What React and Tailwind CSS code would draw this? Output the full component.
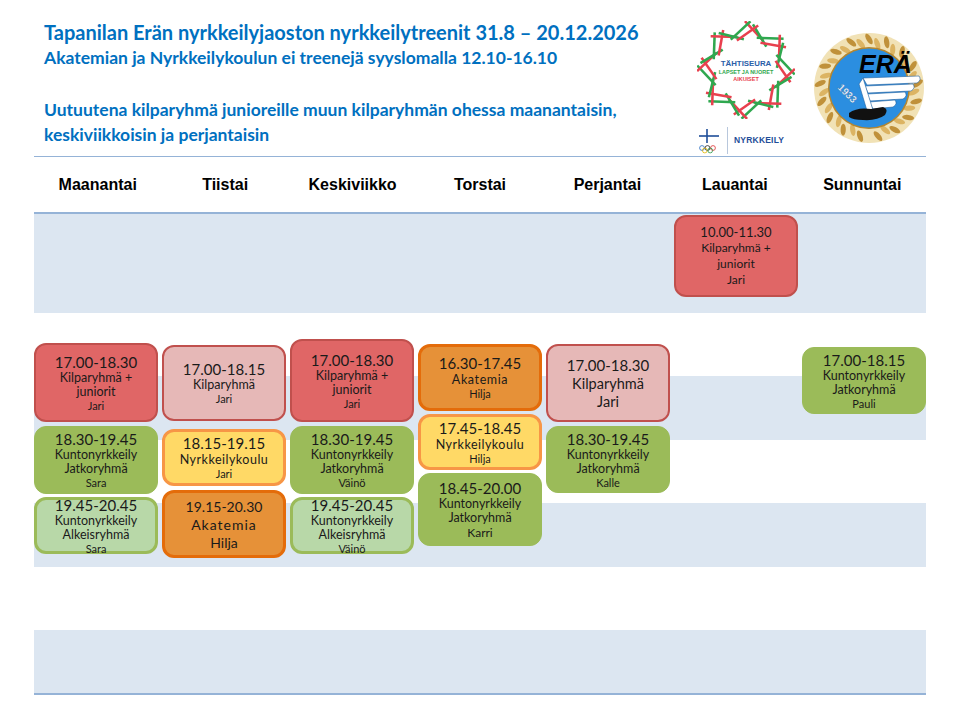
import React from 'react';

const T = 'text-[15px] leading-[18px]';
const N = 'text-[12.5px] leading-[14px]';
const S = 'text-[11px] leading-[14px]';
const L = 'text-[14px] leading-[19px]';

const tone = {
    red: 'bg-[#e06666] border-2 border-[#c0504d]',
    pink: 'bg-[#e6b8b7] border-2 border-[#c0504d]',
    green: 'bg-[#9bbb59] border border-[#9bbb59]',
    light: 'bg-[#b8d8a8] border-[3px] border-[#9bbb59]',
    yellow: 'bg-[#ffd966] border-[3px] border-[#f79646]',
    orange: 'bg-[#e69138] border-[3px] border-[#e46c0a]',
};

const days = ['Maanantai', 'Tiistai', 'Keskiviikko', 'Torstai', 'Perjantai', 'Lauantai', 'Sunnuntai'];

const columns = [
    [
        { t: 'red', box: 'mt-[129px] h-[79px]', lines: [['17.00-18.30', T], ['Kilparyhmä +', N], ['juniorit', N], ['Jari', S]] },
        { t: 'green', box: 'mt-[4px] h-[68px]', lines: [['18.30-19.45', T], ['Kuntonyrkkeily', N], ['Jatkoryhmä', N], ['Sara', S]] },
        { t: 'light', box: 'mt-[3px] h-[57px]', lines: [['19.45-20.45', T], ['Kuntonyrkkeily', N], ['Alkeisryhmä', N], ['Sara', S]] },
    ],
    [
        { t: 'pink', box: 'mt-[131px] h-[76px]', lines: [['17.00-18.15', T], ['Kilparyhmä', N], ['Jari', S]] },
        { t: 'yellow', box: 'mt-[8px] h-[57px]', lines: [['18.15-19.15', T], ['Nyrkkeilykoulu', 'text-[12.5px] leading-[15px] tracking-[0.5px]'], ['Jari', S]] },
        { t: 'orange', box: 'mt-[4px] h-[68px]', lines: [['19.15-20.30', L], ['Akatemia', 'text-[14px] leading-[17px] tracking-[1px]'], ['Hilja', 'text-[14px] leading-[19px]']] },
    ],
    [
        { t: 'red', box: 'mt-[125px] h-[83px]', lines: [['17.00-18.30', T], ['Kilparyhmä +', N], ['juniorit', N], ['Jari', S]] },
        { t: 'green', box: 'mt-[4px] h-[68px]', lines: [['18.30-19.45', T], ['Kuntonyrkkeily', N], ['Jatkoryhmä', N], ['Väinö', S]] },
        { t: 'light', box: 'mt-[3px] h-[57px]', lines: [['19.45-20.45', T], ['Kuntonyrkkeily', N], ['Alkeisryhmä', N], ['Väinö', S]] },
    ],
    [
        { t: 'orange', box: 'mt-[130px] h-[67px]', lines: [['16.30-17.45', T], ['Akatemia', 'text-[12.5px] leading-[15px] tracking-[0.6px]'], ['Hilja', S]] },
        { t: 'yellow', box: 'mt-[3px] h-[56px]', lines: [['17.45-18.45', T], ['Nyrkkeilykoulu', 'text-[12.5px] leading-[15px] tracking-[0.5px]'], ['Hilja', S]] },
        { t: 'green', box: 'mt-[3px] h-[73px]', lines: [['18.45-20.00', T], ['Kuntonyrkkeily', N], ['Jatkoryhmä', N], ['Karri', 'text-[12px] leading-[16px]']] },
    ],
    [
        { t: 'pink', box: 'mt-[130px] h-[78px]', lines: [['17.00-18.30', 'text-[15px] leading-[18px]'], ['Kilparyhmä', 'text-[14.5px] leading-[19px]'], ['Jari', 'text-[14.5px] leading-[18px]']] },
        { t: 'green', box: 'mt-[4px] h-[67px]', lines: [['18.30-19.45', T], ['Kuntonyrkkeily', N], ['Jatkoryhmä', N], ['Kalle', S]] },
    ],
    [
        { t: 'red', box: 'mt-[1px] h-[82px]', lines: [['10.00-11.30', 'text-[13px] leading-[16px]'], ['Kilparyhmä +', 'text-[12px] leading-[16px]'], ['juniorit', 'text-[12px] leading-[16px]'], ['Jari', 'text-[12px] leading-[16px]']] },
    ],
    [
        { t: 'green', box: 'mt-[133px] h-[67px]', lines: [['17.00-18.15', T], ['Kuntonyrkkeily', N], ['Jatkoryhmä', N], ['Pauli', S]] },
    ],
];

const bands = [
    'h-[99px] bg-[#dce6f1]',
    'h-[63px]',
    'h-[64px] bg-[#dce6f1]',
    'h-[63px]',
    'h-[64px] bg-[#dce6f1]',
    'h-[63px]',
    'h-[63px] bg-[#dce6f1]',
];

const Card = ({ t, box, lines }) => (
    <div className={`${box} ${tone[t]} rounded-xl flex flex-col items-center justify-center text-[#1a1a1a] text-center`}>
        {lines.map(([txt, cls], i) => (
            <div key={i} className={cls}>{txt}</div>
        ))}
    </div>
);

const StarLogo = () => {
    const sticks = [];
    const star = (rot, r1, r2, offset) => {
        const pts = [];
        for (let i = 0; i < 16; i++) {
            const a = ((i * 22.5 + rot) * Math.PI) / 180;
            const r = i % 2 === 0 ? r1 : r2;
            pts.push([50 + r * Math.sin(a), 50 - r * Math.cos(a)]);
        }
        for (let i = 0; i < 16; i++) {
            const [x1, y1] = pts[i];
            const [x2, y2] = pts[(i + 1) % 16];
            const dx = x2 - x1, dy = y2 - y1;
            const len = Math.hypot(dx, dy);
            const ex = (dx / len) * 4, ey = (dy / len) * 4;
            sticks.push({
                x1: x1 - ex, y1: y1 - ey, x2: x2 + ex, y2: y2 + ey,
                c: (i + offset) % 2 === 0 ? '#e8404e' : '#2fa84f',
            });
        }
    };
    star(2, 47, 36, 0);
    star(12, 44, 33, 1);
    return (
        <svg width="98" height="98" viewBox="0 0 100 100">
            {sticks.map((s, i) => (
                <line key={i} x1={s.x1} y1={s.y1} x2={s.x2} y2={s.y2} stroke={s.c} strokeWidth="2.6" />
            ))}
            <text x="50" y="46" textAnchor="middle" fontFamily="Liberation Sans, sans-serif" fontWeight="700" fontSize="8" fill="#2a5ea8">TÄHTISEURA</text>
            <text x="50" y="54" textAnchor="middle" fontFamily="Liberation Sans, sans-serif" fontWeight="700" fontSize="5.6" fill="#2fa84f">LAPSET JA NUORET</text>
            <text x="50" y="61" textAnchor="middle" fontFamily="Liberation Sans, sans-serif" fontWeight="700" fontSize="5.6" fill="#e8404e">AIKUISET</text>
        </svg>
    );
};

const EraLogo = () => {
    const leaves = [];
    for (let i = 0; i < 34; i++) {
        const deg = i * (360 / 34);
        if (deg > 170 && deg < 190) continue;
        const a = (deg * Math.PI) / 180;
        const r = i % 2 === 0 ? 49 : 45;
        leaves.push({ x: 56 + r * Math.sin(a), y: 56 - r * Math.cos(a), rot: deg + 60, c: i % 2 === 0 ? '#c0913a' : '#dcb463' });
    }
    return (
        <svg width="112" height="112" viewBox="0 0 112 112">
            <circle cx="56" cy="56" r="55" fill="#f1e2b6" />
            {leaves.map((l, i) => (
                <ellipse key={i} cx={l.x} cy={l.y} rx="6" ry="2.6" fill={l.c} transform={`rotate(${l.rot} ${l.x} ${l.y})`} />
            ))}
            <circle cx="56" cy="56" r="41" fill="#b5862f" />
            <circle cx="56" cy="56" r="39.5" fill="#2b8ee0" />
            <g fill="#ffffff" stroke="#1f5fa0" strokeWidth="0.6">
                <path d="M50 46 L106 44 Q109 48 104 51 L54 53 Z" />
                <path d="M52 54 L100 52 Q103 56 98 59 L55 61 Z" />
                <path d="M54 62 L92 60 Q95 64 90 67 L57 69 Z" />
                <path d="M56 70 L82 68 Q85 72 80 75 L60 77 Z" />
                <path d="M50 46 L60 78 L55 82 L46 52 Z" />
            </g>
            <text x="46" y="41" fontFamily="Liberation Sans, sans-serif" fontStyle="italic" fontWeight="700" fontSize="25" fill="#000000">ERÄ</text>
            <text x="24" y="56" fontFamily="Liberation Sans, sans-serif" fontWeight="700" fontSize="10" fill="#ffffff" stroke="#1f5fa0" strokeWidth="0.3" transform="rotate(45 24 56)">1933</text>
            <path d="M36 81 Q44 75 58 77 L70 75 Q76 77 72 83 Q64 89 50 88 Q40 88 36 85 Z" fill="#111" />
        </svg>
    );
};

const NyrkkeilyMark = () => (
    <div className="flex items-center mt-[8px]">
        <svg width="24" height="26" viewBox="0 0 24 26">
            <line x1="2" y1="8" x2="22" y2="8" stroke="#1f4e99" strokeWidth="1.6" />
            <line x1="10" y1="1" x2="10" y2="15" stroke="#1f4e99" strokeWidth="1.6" />
            <g fill="none" strokeWidth="0.8">
                <circle cx="5" cy="20" r="2.4" stroke="#2a6dc0" />
                <circle cx="10.5" cy="20" r="2.4" stroke="#222" />
                <circle cx="16" cy="20" r="2.4" stroke="#d33" />
                <circle cx="7.8" cy="22.5" r="2.4" stroke="#e6b800" />
                <circle cx="13.2" cy="22.5" r="2.4" stroke="#2a9a4a" />
            </g>
        </svg>
        <div className="ml-[6px] w-px h-[27px] bg-[#b8c7dc]" />
        <div className="ml-[6px] text-[8.5px] font-bold text-[#1f4e99] font-['Liberation_Sans',sans-serif] tracking-[0.2px]">NYRKKEILY</div>
    </div>
);

export default function App() {
    return (
        <div className="w-[960px] h-[720px] bg-white overflow-hidden font-['Lato',sans-serif]">
            <div className="flex h-[156px]">
                <div className="flex-1 pl-[44px] pt-[20px] text-[#0070c0] font-bold">
                    <div className="text-[20px] leading-[24px]">Tapanilan Erän nyrkkeilyjaoston nyrkkeilytreenit 31.8 – 20.12.2026</div>
                    <div className="text-[17.5px] leading-[24px] mt-[2px]">Akatemian ja Nyrkkeilykoulun ei treenejä syyslomalla 12.10-16.10</div>
                    <div className="text-[17.5px] leading-[25px] mt-[27px]">Uutuutena kilparyhmä junioreille muun kilparyhmän ohessa maanantaisin,</div>
                    <div className="text-[17.5px] leading-[25px]">keskiviikkoisin ja perjantaisin</div>
                </div>
                <div className="flex pr-[35px]">
                    <div className="flex flex-col pt-[21px] w-[100px]">
                        <StarLogo />
                        <NyrkkeilyMark />
                    </div>
                    <div className="ml-[16px] pt-[32px]">
                        <EraLogo />
                    </div>
                </div>
            </div>

            <div className="mx-[34px]">
                <div className="grid grid-cols-7 h-[58px] border-t border-b-2 border-[#95b3d7] items-center font-['Liberation_Sans',sans-serif] font-bold text-[16px] text-black text-center">
                    {days.map(d => <div key={d}>{d}</div>)}
                </div>
                <div className="relative border-b-2 border-[#95b3d7]">
                    {bands.map((b, i) => <div key={i} className={b} />)}
                    <div className="absolute inset-x-0 top-0 grid grid-cols-7 gap-x-[4px]">
                        {columns.map((col, i) => (
                            <div key={i} className="flex flex-col">
                                {col.map((c, j) => <Card key={j} {...c} />)}
                            </div>
                        ))}
                    </div>
                </div>
            </div>
        </div>
    );
}
